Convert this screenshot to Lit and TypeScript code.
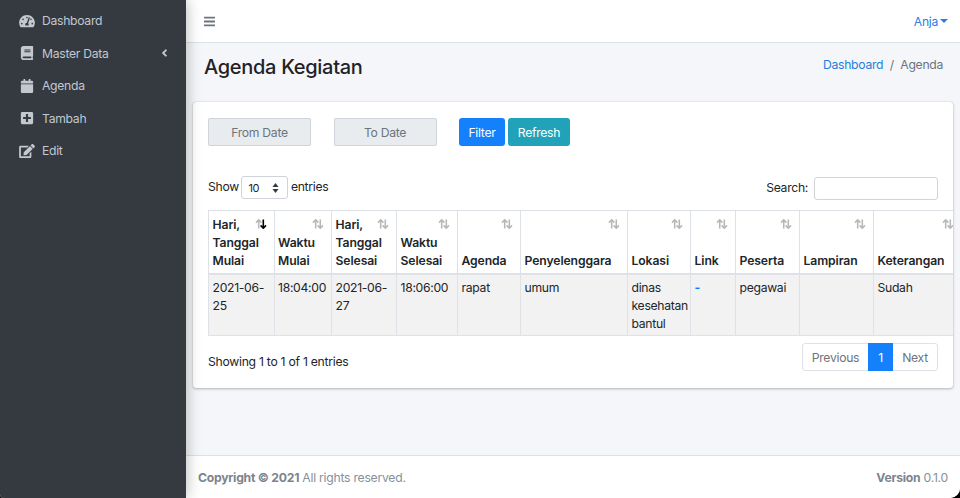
import { LitElement, html, css, svg } from "lit";
import { customElement } from "lit/decorators.js";

const icons: Record<string, [string, string]> = {
  gauge: ["0 0 576 512", "M288 32C128.94 32 0 160.94 0 320c0 52.8 14.25 102.26 39.06 144.8 5.61 9.62 16.3 15.2 27.44 15.2h443c11.14 0 21.83-5.58 27.44-15.2C561.75 422.26 576 372.8 576 320c0-159.06-128.94-288-288-288zm0 64c14.71 0 26.58 10.13 30.32 23.65-1.11 2.26-2.64 4.23-3.45 6.67l-9.22 27.67c-5.13 3.49-10.97 6.01-17.64 6.01-17.67 0-32-14.33-32-32S270.33 96 288 96zM96 384c-17.67 0-32-14.33-32-32s14.33-32 32-32 32 14.33 32 32-14.33 32-32 32zm48-160c-17.67 0-32-14.33-32-32s14.33-32 32-32 32 14.33 32 32-14.33 32-32 32zm246.77-72.41l-61.33 184C343.13 347.33 352 364.54 352 384c0 11.72-3.38 22.55-8.88 32H232.88c-5.5-9.45-8.88-20.28-8.88-32 0-33.94 26.5-61.43 59.9-63.59l61.34-184.01c4.17-12.56 17.73-19.45 30.36-15.17 12.57 4.19 19.35 17.79 15.17 30.36zm14.66 57.2l15.52-46.55c3.47-1.29 7.13-2.23 11.05-2.23 17.67 0 32 14.33 32 32s-14.33 32-32 32c-11.38-.01-20.89-6.28-26.57-15.22zM480 384c-17.67 0-32-14.33-32-32s14.33-32 32-32 32 14.33 32 32-14.33 32-32 32z"],
  book: ["0 0 448 512", "M448 360V24c0-13.3-10.7-24-24-24H96C43 0 0 43 0 96v320c0 53 43 96 96 96h328c13.3 0 24-10.7 24-24v-16c0-7.5-3.5-14.3-8.9-18.7-4.2-15.4-4.2-59.3 0-74.7 5.4-4.3 8.9-11.1 8.9-18.6zM128 134c0-3.3 2.7-6 6-6h212c3.3 0 6 2.7 6 6v20c0 3.3-2.7 6-6 6H134c-3.3 0-6-2.7-6-6v-20zm0 64c0-3.3 2.7-6 6-6h212c3.3 0 6 2.7 6 6v20c0 3.3-2.7 6-6 6H134c-3.3 0-6-2.7-6-6v-20zm253.4 250H96c-17.7 0-32-14.3-32-32 0-17.6 14.4-32 32-32h285.4c-1.9 17.1-1.9 46.9 0 64z"],
  calendar: ["0 0 448 512", "M12 192h424c6.6 0 12 5.4 12 12v260c0 26.5-21.5 48-48 48H48c-26.5 0-48-21.5-48-48V204c0-6.6 5.4-12 12-12zm436-44v-36c0-26.5-21.5-48-48-48h-48V12c0-6.6-5.4-12-12-12h-40c-6.6 0-12 5.4-12 12v52H160V12c0-6.6-5.4-12-12-12h-40c-6.6 0-12 5.4-12 12v52H48C21.5 64 0 85.5 0 112v36c0 6.6 5.4 12 12 12h424c6.6 0 12-5.4 12-12z"],
  plus: ["0 0 448 512", "M400 32H48C21.5 32 0 53.5 0 80v352c0 26.5 21.5 48 48 48h352c26.5 0 48-21.5 48-48V80c0-26.5-21.5-48-48-48zm-32 252c0 6.6-5.4 12-12 12h-92v92c0 6.6-5.4 12-12 12h-56c-6.6 0-12-5.4-12-12v-92H92c-6.6 0-12-5.4-12-12v-56c0-6.6 5.4-12 12-12h92v-92c0-6.6 5.4-12 12-12h56c6.6 0 12 5.4 12 12v92h92c6.6 0 12 5.4 12 12v56z"],
  edit: ["0 0 576 512", "M402.6 83.2l90.2 90.2c3.8 3.8 3.8 10 0 13.8L274.4 405.6l-92.8 10.3c-12.4 1.4-22.9-9.1-21.5-21.5l10.3-92.8L388.8 83.2c3.8-3.8 10-3.8 13.8 0zm162-22.9l-48.8-48.8c-15.2-15.2-39.9-15.2-55.2 0l-35.4 35.4c-3.8 3.8-3.8 10 0 13.8l90.2 90.2c3.8 3.8 10 3.8 13.8 0l35.4-35.4c15.2-15.3 15.2-40 0-55.2zM384 346.2V448H64V128h229.8c3.2 0 6.2-1.3 8.5-3.5l40-40c7.6-7.6 2.2-20.5-8.5-20.5H48C21.5 64 0 85.5 0 112v352c0 26.5 21.5 48 48 48h352c26.5 0 48-21.5 48-48V306.2c0-10.7-12.9-16-20.5-8.5l-40 40c-2.2 2.3-3.5 5.3-3.5 8.5z"],
  bars: ["0 0 448 512", "M16 132h416c8.837 0 16-7.163 16-16V76c0-8.837-7.163-16-16-16H16C7.163 60 0 67.163 0 76v40c0 8.837 7.163 16 16 16zm0 160h416c8.837 0 16-7.163 16-16v-40c0-8.837-7.163-16-16-16H16c-8.837 0-16 7.163-16 16v40c0 8.837 7.163 16 16 16zm0 160h416c8.837 0 16-7.163 16-16v-40c0-8.837-7.163-16-16-16H16c-8.837 0-16 7.163-16 16v40c0 8.837 7.163 16 16 16z"],
  left: ["0 0 256 512", "M31.7 239l136-136c9.4-9.4 24.6-9.4 33.9 0l22.6 22.6c9.4 9.4 9.4 24.6 0 33.9L127.9 256l96.4 96.4c9.4 9.4 9.4 24.6 0 33.9L201.7 409c-9.4 9.4-24.6 9.4-33.9 0l-136-136c-9.5-9.4-9.5-24.6-.1-34z"],
};

const icon = (n: string) => {
  const [vb, d] = icons[n];
  return html`<svg viewBox=${vb} aria-hidden="true" fill="currentColor">${svg`<path d=${d}></path>`}</svg>`;
};

const nav = [
  { i: "gauge", t: "Dashboard" },
  { i: "book", t: "Master Data", arrow: true },
  { i: "calendar", t: "Agenda" },
  { i: "plus", t: "Tambah" },
  { i: "edit", t: "Edit" },
];

const cols: [string, number][] = [
  ["Hari, Tanggal Mulai", 65.5],
  ["Waktu Mulai", 57.5],
  ["Hari, Tanggal Selesai", 65],
  ["Waktu Selesai", 61],
  ["Agenda", 63],
  ["Penyelenggara", 107],
  ["Lokasi", 63],
  ["Link", 45],
  ["Peserta", 64],
  ["Lampiran", 74],
  ["Keterangan", 88],
];

const row = ["2021-06-25", "18:04:00", "2021-06-27", "18:06:00", "rapat", "umum", "dinas kesehatan bantul", "-", "pegawai", "", "Sudah"];

const sortIcon = (active: boolean) => html`<svg class="sort" viewBox="0 0 12 10" aria-hidden="true">${svg`
  <path d="M3.7 9.5V1M1 3.6 3.7.8l2.7 2.8" fill="none" stroke="#000" stroke-width="1.6" opacity=".28"></path>
  <path d="M8.3 .5V9M5.6 6.4 8.3 9.2 11 6.4" fill="none" stroke="#000" stroke-width="1.6" opacity=${active ? "1" : ".28"}></path>`}</svg>`;

@customElement("app-root")
export class AppRoot extends LitElement {
  static styles = css`
    :host { display: block; height: 100vh; background: #000; overflow: hidden; }
    * { box-sizing: border-box; }
    .window {
      display: flex; height: 498px; overflow: hidden; border-radius: 0 0 10px 4px;
      font: 12.2px/18px Inter, "Liberation Sans", sans-serif; letter-spacing: -0.3px; color: #212529; background: #f4f6f9;
    }
    .side {
      width: 186px; flex: none; background: #343a40; color: #c2c7d0; padding-top: 4.7px; position: relative; z-index: 2;
      box-shadow: 0 0 14px rgba(0,0,0,.3);
    }
    .nav { display: flex; align-items: center; height: 32.5px; padding: 0 18px 0 19px; }
    .nav svg { width: 16px; height: 14px; flex: none; }
    .nav .ic { width: 23px; flex: none; display: flex; justify-content: flex-start; }
    .nav .label { padding-top: 1px; }
    .nav .arrow { margin-left: auto; width: 7px; height: 12px; }
    .main { flex: 1; min-width: 0; display: flex; flex-direction: column; }
    .top { height: 43px; flex: none; background: #fff; border-bottom: 1px solid #dee2e6; display: flex; align-items: center; justify-content: space-between; padding: 0 12px 0 18px; }
    .top svg { width: 11px; height: 13px; color: #6c757d; display: block; }
    .user { display: flex; align-items: center; gap: 2px; color: #2a7de1; padding-top: 1px; }
    .caret { width: 0; height: 0; border: 4px solid transparent; border-top-color: currentColor; border-bottom: 0; margin-top: -2px; }
    .head { display: flex; justify-content: space-between; padding: 10px 17px 0 18px; height: 59px; }
    h1 { margin: 0; font-size: 20px; line-height: 29px; font-weight: 500; letter-spacing: -0.3px; color: #1f2327; }
    .crumb { display: flex; gap: 6.5px; padding-top: 3px; color: #6c757d; }
    a { color: #1f7fe0; text-decoration: none; }
    .card {
      margin: 0 7px; height: 286px; background: #fff; border-radius: 3px; padding: 16px 0 0 15px;
      box-shadow: 0 0 1px rgba(0,0,0,.25), 0 1px 3px rgba(0,0,0,.25);
    }
    .filters { display: flex; height: 28px; }
    .date { width: 103px; height: 28px; background: #e9ecef; border: 1px solid #ced4da; border-radius: 2px; color: #6c757d; display: flex; align-items: center; justify-content: center; margin-right: 22.5px; padding-top: 1px; }
    .btn { height: 28px; border-radius: 3px; color: #fff; display: flex; align-items: center; justify-content: center; padding-top: 1px; }
    .blue { width: 46px; background: #1580fb; margin-right: 3px; }
    .teal { width: 62px; background: #22a2b8; }
    .ctrl { display: flex; justify-content: space-between; align-items: center; height: 24px; margin-top: 30px; padding-right: 15px; }
    .show { display: flex; align-items: center; gap: 2.5px; margin-top: -2px; }
    .select { width: 47px; height: 23px; border: 1px solid #ced4da; border-radius: 3px; display: flex; align-items: center; justify-content: space-between; padding: 1px 8px 0 6px; font-size: 11px; margin-top: 1px; }
    .select svg { width: 7px; height: 10px; display: block; }
    .search { display: flex; align-items: center; gap: 6px; }
    .input { width: 124px; height: 23px; border: 1px solid #ced4da; border-radius: 3px; }
    .wrap { margin-top: 10px; overflow: hidden; }
    table { border-collapse: collapse; table-layout: fixed; width: 753px; border-top: 1px solid #dee2e6; border-left: 1px solid #dee2e6; }
    th, td { border: 1px solid #dee2e6; border-top: 0; border-left: 0; padding: 4px 3.5px; text-align: left; vertical-align: bottom; }
    th { font-weight: 600; height: 63px; border-bottom: 2px solid #dee2e6; position: relative; padding-bottom: 3px; padding-right: 14px; letter-spacing: -0.1px; }
    td { background: #f2f2f2; vertical-align: top; height: 61px; padding-top: 4px; padding-bottom: 2.5px; }
    td a { color: #007bff; font-weight: 700; }
    .sort { position: absolute; top: 8px; right: 7px; width: 12px; height: 10px; display: block; }
    .bottom { display: flex; justify-content: space-between; align-items: flex-start; padding: 7px 15px 0 0; }
    .info { padding-top: 10px; letter-spacing: -0.27px; }
    .pager { display: flex; height: 28px; border: 1px solid #dee2e6; border-radius: 3px; color: #6c757d; }
    .pager div { display: flex; align-items: center; justify-content: center; padding-top: 1px; }
    .prev { width: 65px; } .cur { width: 25px; background: #1580fb; color: #fff; margin: -1px 0; } .next { width: 44px; }
    .spacer { flex: 1; }
    .foot { height: 43px; flex: none; background: #fff; border-top: 1px solid #dee2e6; display: flex; align-items: center; justify-content: space-between; padding: 1px 12px 0; color: #869099; letter-spacing: -0.25px; }
    .foot b { font-weight: 700; color: #7c858d; }
  `;

  render() {
    return html`<div class="window">
      <aside class="side">
        ${nav.map((n) => html`<div class="nav"><span class="ic">${icon(n.i)}</span><span class="label">${n.t}</span>${n.arrow ? html`<svg class="arrow" viewBox=${icons.left[0]} fill="currentColor">${svg`<path d=${icons.left[1]}></path>`}</svg>` : ""}</div>`)}
      </aside>
      <div class="main">
        <div class="top">${icon("bars")}<div class="user">Anja<span class="caret"></span></div></div>
        <div class="head">
          <h1>Agenda Kegiatan</h1>
          <div class="crumb"><a>Dashboard</a><span>/</span><span>Agenda</span></div>
        </div>
        <section class="card">
          <div class="filters">
            <div class="date">From Date</div><div class="date">To Date</div>
            <div class="btn blue">Filter</div><div class="btn teal">Refresh</div>
          </div>
          <div class="ctrl">
            <div class="show">Show <div class="select">10 <svg viewBox="0 0 7 10"><path d="M3.5 0 6.5 4H.5zM3.5 10 .5 6h6z" fill="#343a40"></path></svg></div> entries</div>
            <div class="search">Search: <div class="input"></div></div>
          </div>
          <div class="wrap">
            <table>
              <colgroup>${cols.map((c) => html`<col style="width:${c[1]}px" />`)}</colgroup>
              <thead><tr>${cols.map((c, i) => html`<th>${c[0]}${sortIcon(i === 0)}</th>`)}</tr></thead>
              <tbody><tr>${row.map((v) => html`<td>${v === "-" ? html`<a>-</a>` : v}</td>`)}</tr></tbody>
            </table>
          </div>
          <div class="bottom">
            <div class="info">Showing 1 to 1 of 1 entries</div>
            <div class="pager"><div class="prev">Previous</div><div class="cur">1</div><div class="next">Next</div></div>
          </div>
        </section>
        <div class="spacer"></div>
        <footer class="foot"><div><b>Copyright © 2021</b> All rights reserved.</div><div><b>Version</b> 0.1.0</div></footer>
      </div>
    </div>`;
  }
}
